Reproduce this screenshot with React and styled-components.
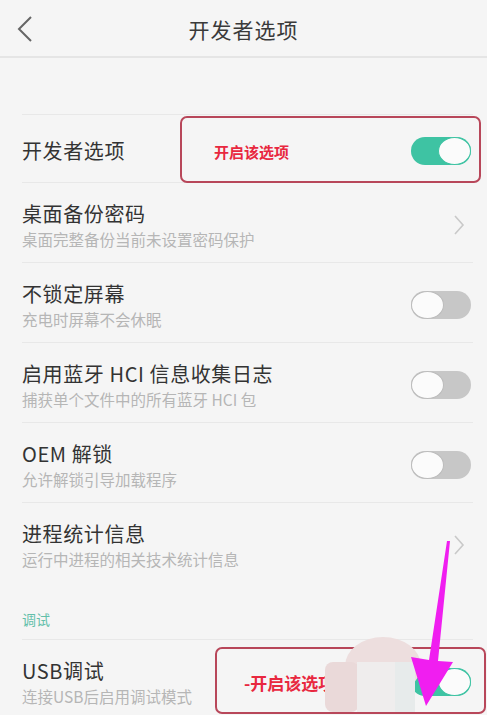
import React from "react";
import styled, { createGlobalStyle } from "styled-components";

const GlobalStyle = createGlobalStyle`
  html, body {
    margin: 0;
    padding: 0;
    background: #f5f5f5;
  }
  body {
    font-family: "Noto Sans CJK SC", "Noto Sans", sans-serif;
  }
`;

const Page = styled.div`
  position: relative;
  width: 487px;
  height: 715px;
  overflow: hidden;
  background: #f5f5f5;
  color: #333;
`;

const Header = styled.div`
  display: grid;
  grid-template-columns: 60px 1fr 60px;
  align-items: center;
  height: 56px;
  border-bottom: 2px solid #e5e5e5;
`;

const Back = styled.div`
  display: flex;
  align-items: center;
  padding-left: 16px;
  padding-top: 2px;
`;

const Title = styled.div`
  text-align: center;
  font-size: 21px;
  color: #3a3a3a;
  letter-spacing: 1px;
  padding-top: 2px;
`;

const Spacer = styled.div`
  height: 56px;
`;

const Row = styled.div`
  display: flex;
  align-items: center;
  justify-content: space-between;
  height: ${(p) => p.$h}px;
  margin: 0 14px 0 22px;
  padding-top: ${(p) => p.$pt || 0}px;
  box-sizing: border-box;
  border-top: 1px solid #e8e8e8;
`;

const Texts = styled.div`
  display: flex;
  flex-direction: column;
`;

const ItemTitle = styled.div`
  font-size: 20px;
  line-height: 26px;
  color: #333;
  letter-spacing: 0.6px;
`;

const ItemSub = styled.div`
  font-size: 15.5px;
  line-height: 20px;
  margin-top: 2px;
  color: #b6b6b6;
`;

const Track = styled.div`
  position: relative;
  width: 60px;
  height: 28px;
  border-radius: 14px;
  background: ${(p) => (p.$on ? "#3ec3a3" : "#c7c7c7")};
  margin-right: 2px;
  display: flex;
  justify-content: ${(p) => (p.$on ? "flex-end" : "flex-start")};
  align-items: center;
`;

const Knob = styled.div`
  width: 33px;
  height: 28px;
  border-radius: 50%;
  box-sizing: border-box;
  background: #fbfbfb;
  border: 1.5px solid ${(p) => (p.$on ? "#3ec3a3" : "#bcbcbc")};
`;

const Section = styled.div`
  height: 57px;
  display: flex;
  align-items: flex-end;
  padding: 0 0 10px 22px;
  box-sizing: border-box;
  font-size: 14px;
  color: #63bfaa;
`;

const Mark = styled.div`
  position: absolute;
  left: ${(p) => p.$x}px;
  top: ${(p) => p.$y}px;
  width: ${(p) => p.$w}px;
  height: ${(p) => p.$h}px;
  box-sizing: border-box;
  border: 2px solid #b8475a;
  border-radius: 7px;
  display: flex;
  align-items: center;
  padding-left: ${(p) => p.$pl}px;
  padding-top: 4px;
  font-size: ${(p) => p.$fs}px;
  font-weight: bold;
  color: #e8283f;
  pointer-events: none;
`;

const Overlay = styled.svg`
  position: absolute;
  left: 0;
  top: 0;
  pointer-events: none;
`;

const Toggle = ({ on }) => (
  <Track $on={on}>
    <Knob $on={on} />
  </Track>
);

const Chevron = () => (
  <svg width="12" height="22" viewBox="0 0 12 22" style={{ marginRight: 8 }}>
    <polyline points="2,2 10,11 2,20" fill="none" stroke="#c9c9c9" strokeWidth="1.6" />
  </svg>
);

const items = [
  { title: "桌面备份密码", sub: "桌面完整备份当前未设置密码保护", end: "chevron" },
  { title: "不锁定屏幕", sub: "充电时屏幕不会休眠", end: "off" },
  { title: "启用蓝牙 HCI 信息收集日志", sub: "捕获单个文件中的所有蓝牙 HCI 包", end: "off" },
  { title: "OEM 解锁", sub: "允许解锁引导加载程序", end: "off" },
  { title: "进程统计信息", sub: "运行中进程的相关技术统计信息", end: "chevron" },
];

export default function App() {
  return (
    <>
      <GlobalStyle />
      <Page>
        <Header>
          <Back>
            <svg width="18" height="28" viewBox="0 0 18 28">
              <polyline points="15,2 3,14 15,26" fill="none" stroke="#666" strokeWidth="2" />
            </svg>
          </Back>
          <Title>开发者选项</Title>
          <div />
        </Header>
        <Spacer />

        <Row $h={68} $pt={4}>
          <ItemTitle>开发者选项</ItemTitle>
          <Toggle on />
        </Row>

        {items.map((it) => (
          <Row key={it.title} $h={80} $pt={4}>
            <Texts>
              <ItemTitle>{it.title}</ItemTitle>
              <ItemSub>{it.sub}</ItemSub>
            </Texts>
            {it.end === "chevron" ? <Chevron /> : <Toggle on={false} />}
          </Row>
        ))}

        <Section>调试</Section>

        <Row $h={80} $pt={4}>
          <Texts>
            <ItemTitle>USB调试</ItemTitle>
            <ItemSub>连接USB后启用调试模式</ItemSub>
          </Texts>
          <Toggle on />
        </Row>

        <Mark $x={180} $y={116} $w={301} $h={67} $pl={32} $fs={15}>开启该选项</Mark>
        <Mark $x={215} $y={647} $w={271} $h={67} $pl={27} $fs={17}>-开启该选项</Mark>

        <Overlay width="487" height="715" viewBox="0 0 487 715">
          <ellipse cx="383" cy="666" rx="38" ry="29" fill="#eddede" />
          <rect x="325" y="662" width="34" height="50" rx="8" fill="#ead9d9" />
          <rect x="357" y="662" width="40" height="50" fill="#efeded" />
          <rect x="395" y="662" width="20" height="50" fill="#e7ebeb" />
          <polygon
            points="447,541 450,541 438,661 453,662 426,706 411,657 429,660"
            fill="#f01ef0"
          />
        </Overlay>
      </Page>
    </>
  );
}
